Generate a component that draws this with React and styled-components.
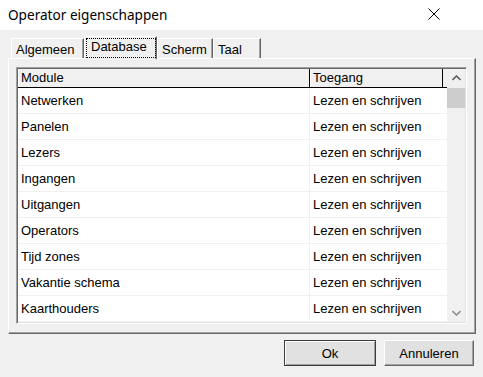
import styled, { createGlobalStyle } from "styled-components";

const GlobalStyle = createGlobalStyle`
	html, body {
		margin: 0;
		padding: 0;
		background: #f0f0f0;
	}
	* {
		box-sizing: border-box;
	}
`;

const tabs = [
	{ label: "Algemeen", width: 73 },
	{ label: "Database", width: 73, active: true },
	{ label: "Scherm", width: 56 },
	{ label: "Taal", width: 48 },
];

const modules = [
	"Netwerken",
	"Panelen",
	"Lezers",
	"Ingangen",
	"Uitgangen",
	"Operators",
	"Tijd zones",
	"Vakantie schema",
	"Kaarthouders",
];

export default function App() {
	return (
		<>
			<GlobalStyle />
			<Window>
				<TitleBar>
					<Title>Operator eigenschappen</Title>
					<CloseButton>
						<svg width="12" height="12" viewBox="0 0 12 12">
							<path d="M0.5 0.5 L11.5 11.5 M11.5 0.5 L0.5 11.5" stroke="#000" strokeWidth="1" fill="none" />
						</svg>
					</CloseButton>
				</TitleBar>
				<Body>
					<TabStrip>
						{tabs.map((t) => (
							<Tab key={t.label} $w={t.width} $active={t.active}>
								{t.active ? <Focus>{t.label}</Focus> : t.label}
							</Tab>
						))}
					</TabStrip>
					<Panel>
						<ListView>
							<ListContent>
								<HeaderRow>
									<HeaderCell $w={292}>Module</HeaderCell>
									<HeaderCell $w={133}>Toegang</HeaderCell>
								</HeaderRow>
								{modules.map((m) => (
									<Row key={m}>
										<Cell $w={292} $divider>{m}</Cell>
										<Cell>Lezen en schrijven</Cell>
									</Row>
								))}
							</ListContent>
							<ScrollBar>
								<ArrowButton>
									<svg width="9" height="6" viewBox="0 0 9 6">
										<path d="M0.5 5 L4.5 1 L8.5 5" stroke="#606060" strokeWidth="1.6" fill="none" />
									</svg>
								</ArrowButton>
								<Track>
									<Thumb />
								</Track>
								<ArrowButton>
									<svg width="9" height="6" viewBox="0 0 9 6">
										<path d="M0.5 1 L4.5 5 L8.5 1" stroke="#909090" strokeWidth="1.6" fill="none" />
									</svg>
								</ArrowButton>
							</ScrollBar>
						</ListView>
					</Panel>
					<ButtonRow>
						<Button $default>Ok</Button>
						<Button>Annuleren</Button>
					</ButtonRow>
				</Body>
			</Window>
		</>
	);
}

const Window = styled.div`
	width: 483px;
	height: 377px;
	display: flex;
	flex-direction: column;
	background: #f0f0f0;
	font-family: "Liberation Sans", Arial, sans-serif;
	font-size: 13px;
	color: #000;
	overflow: hidden;
`;

const TitleBar = styled.div`
	height: 30px;
	flex-shrink: 0;
	background: #fff;
	display: flex;
	align-items: center;
	justify-content: space-between;
	padding: 0 0 0 8px;
`;

const Title = styled.div`
	font-family: "Noto Sans", "Open Sans", sans-serif;
	font-size: 13.6px;
	color: #000;
	padding-bottom: 1px;
`;

const CloseButton = styled.div`
	width: 46px;
	height: 30px;
	display: flex;
	align-items: center;
	justify-content: center;
	margin-right: 26px;
	padding-bottom: 2px;
`;

const Body = styled.div`
	flex: 1;
	display: flex;
	flex-direction: column;
	padding: 6px 7px 0 8px;
`;

const TabStrip = styled.div`
	height: 22px;
	display: flex;
	align-items: flex-end;
	padding-left: 3px;
	position: relative;
	z-index: 1;
`;

const Tab = styled.div`
	width: ${(p) => p.$w}px;
	height: ${(p) => (p.$active ? 23 : 20)}px;
	margin-bottom: ${(p) => (p.$active ? -1 : 0)}px;
	background: #f0f0f0;
	border-top: 1px solid #fff;
	border-left: 1px solid #fff;
	border-right: 1px solid #696969;
	box-shadow: inset -1px 0 #a0a0a0;
	display: flex;
	align-items: ${(p) => (p.$active ? "flex-start" : "center")};
	padding: ${(p) => (p.$active ? "1px 0 0 1px" : "1px 0 0 4px")};
`;

const Focus = styled.span`
	display: block;
	width: 71px;
	height: 20px;
	outline: 1px dotted #000;
	outline-offset: -1px;
	padding: 1px 0 0 5px;
`;

const Panel = styled.div`
	height: 276px;
	background: #f0f0f0;
	border-top: 1px solid #fff;
	border-left: 1px solid #fff;
	border-right: 1px solid #696969;
	border-bottom: 1px solid #696969;
	box-shadow: inset -1px -1px #a0a0a0;
	padding: 8px 8px 9px 7px;
`;

const ListView = styled.div`
	height: 257px;
	background: #fff;
	border-top: 1px solid #a0a0a0;
	border-left: 1px solid #a0a0a0;
	border-right: 1px solid #fff;
	border-bottom: 1px solid #fff;
	box-shadow: inset 1px 1px #696969, inset -1px -1px #e3e3e3;
	padding: 1px;
	display: flex;
	overflow: hidden;
`;

const ListContent = styled.div`
	flex: 1;
	display: flex;
	flex-direction: column;
`;

const HeaderRow = styled.div`
	height: 19px;
	display: flex;
	background: #f0f0f0;
	border-bottom: 1px solid #000;
	flex-shrink: 0;
`;

const HeaderCell = styled.div`
	width: ${(p) => p.$w}px;
	border-right: 1px solid #000;
	border-left: 1px solid #fff;
	padding: 1px 0 0 2px;
	line-height: 16px;
`;

const Row = styled.div`
	height: 26px;
	flex-shrink: 0;
	display: flex;
	border-bottom: 1px solid #f0f0f0;
`;

const Cell = styled.div`
	width: ${(p) => (p.$w ? `${p.$w}px` : "auto")};
	flex: ${(p) => (p.$w ? "none" : 1)};
	border-right: ${(p) => (p.$divider ? "1px solid #f0f0f0" : "none")};
	padding-left: 3px;
	display: flex;
	align-items: center;
`;

const ScrollBar = styled.div`
	width: 18px;
	flex-shrink: 0;
	background: #f0f0f0;
	display: flex;
	flex-direction: column;
`;

const ArrowButton = styled.div`
	height: 18px;
	display: flex;
	align-items: center;
	justify-content: center;
`;

const Track = styled.div`
	flex: 1;
	padding-top: 1px;
`;

const Thumb = styled.div`
	height: 20px;
	background: #cdcdcd;
`;

const ButtonRow = styled.div`
	display: flex;
	justify-content: flex-end;
	gap: 8px;
	padding: 6px 2px 0 0;
`;

const Button = styled.div`
	width: ${(p) => (p.$default ? 92 : 90)}px;
	height: 26px;
	background: #e1e1e1;
	display: flex;
	align-items: center;
	justify-content: center;
	${(p) =>
		p.$default
			? `
		border: 1px solid #3c3c3c;
		box-shadow: inset 1px 1px #fff, inset -1px -1px #a0a0a0;
	`
			: `
		border-top: 1px solid #fff;
		border-left: 1px solid #fff;
		border-right: 1px solid #696969;
		border-bottom: 1px solid #696969;
		box-shadow: inset -1px -1px #a0a0a0;
	`}
`;
